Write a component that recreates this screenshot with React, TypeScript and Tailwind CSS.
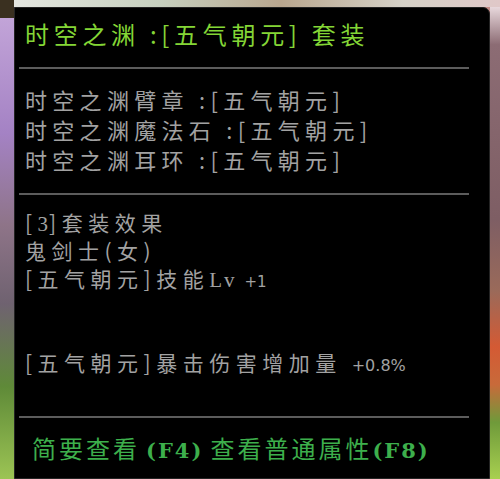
const cjk = "font-['Noto_Sans_CJK_SC','Noto_Sans',sans-serif]";

function Divider() {
  return <div className="ml-[4px] mr-[20px] h-[2px] bg-[#5c5c5c]" />;
}

function Line({ children, tall }: { children?: React.ReactNode; tall?: boolean }) {
  return (
    <div className={`${tall ? "h-[30px] leading-[30px]" : "h-[28px] leading-[28px]"} whitespace-nowrap`}>
      {children}
    </div>
  );
}

export default function App() {
  return (
    <div className="w-[500px] h-[479px] overflow-hidden flex bg-[linear-gradient(90deg,#8d6f9e_0%,#b9b4a6_40%,#a48f86_70%,#c48a86_100%)]">
      {/* left scenery strip */}
      <div className="w-[14px] h-full flex flex-col">
        <div className="h-[18px] bg-[#3a3020]" />
        <div className="flex-1 bg-[linear-gradient(180deg,#c2a4d8_0%,#a482c4_25%,#8e7488_45%,#6f6270_62%,#5f8a38_80%,#9cc454_100%)]" />
      </div>
      <div className="flex-1 flex flex-col">
        {/* top scenery strip */}
        <div className="h-[7px] bg-[linear-gradient(90deg,#e4e6e0_0%,#c7d0bf_30%,#b9a78f_55%,#d6d2c8_80%,#e0c8c8_100%)]" />
        <div className="flex flex-1">
          <div
            className={`w-[476px] h-[472px] bg-black border border-[#242424] rounded-tr-[7px] ${cjk}`}
          >
            <div className="h-[59px] pl-[10px] pt-[10px] text-[24px] leading-[32px] tracking-[4.7px] text-[#84d636] whitespace-nowrap">
              时空之渊 :[五气朝元] 套装
            </div>
            <Divider />
            <div className="pt-[15px] pb-[19px] pl-[10px] text-[22px] tracking-[5.3px] text-[#a2a2a2]">
              <Line tall>时空之渊臂章 :[五气朝元]</Line>
              <Line tall>时空之渊魔法石 :[五气朝元]</Line>
              <Line tall>时空之渊耳环 :[五气朝元]</Line>
            </div>
            <Divider />
            <div className="pt-[13px] h-[221px] pl-[10px] text-[21px] tracking-[5.5px] text-[#a2a2a2]">
              <Line>
                [<span className="font-['Liberation_Serif',serif] tracking-[1px]">3</span>]套装效果
              </Line>
              <Line>鬼剑士(女)</Line>
              <Line>
                [五气朝元]技能
                <span className="font-['Liberation_Serif',serif] tracking-[2px]">Lv</span>
                <span className="ml-[8px] text-[15px] tracking-[0px] font-['DejaVu_Sans',sans-serif]">+1</span>
              </Line>
              <Line />
              <Line />
              <Line>
                [五气朝元]暴击伤害增加量
                <span className="ml-[10px] text-[16px] tracking-[0px] font-['DejaVu_Sans',sans-serif]">+0.8%</span>
              </Line>
            </div>
            <Divider />
            <div className="pl-[17px] pt-[14px] text-[24px] leading-[32px] tracking-[3px] text-[#3daf4c] whitespace-nowrap">
              简要查看
              <span className="ml-[6px] text-[21px] font-['DejaVu_Serif',serif] font-bold tracking-[2px]">(F4)</span>
              <span className="ml-[7px]">查看普通属性</span>
              <span className="text-[21px] font-['DejaVu_Serif',serif] font-bold tracking-[2px]">(F8)</span>
            </div>
          </div>
          {/* right scenery strip */}
          <div className="flex-1 bg-[linear-gradient(180deg,#e8d8dc_0%,#8c6c74_8%,#7e5e64_45%,#9a6a5a_60%,#d45a34_72%,#c86a3a_80%,#6f9a3a_88%,#a8d050_100%)]" />
        </div>
      </div>
    </div>
  );
}
